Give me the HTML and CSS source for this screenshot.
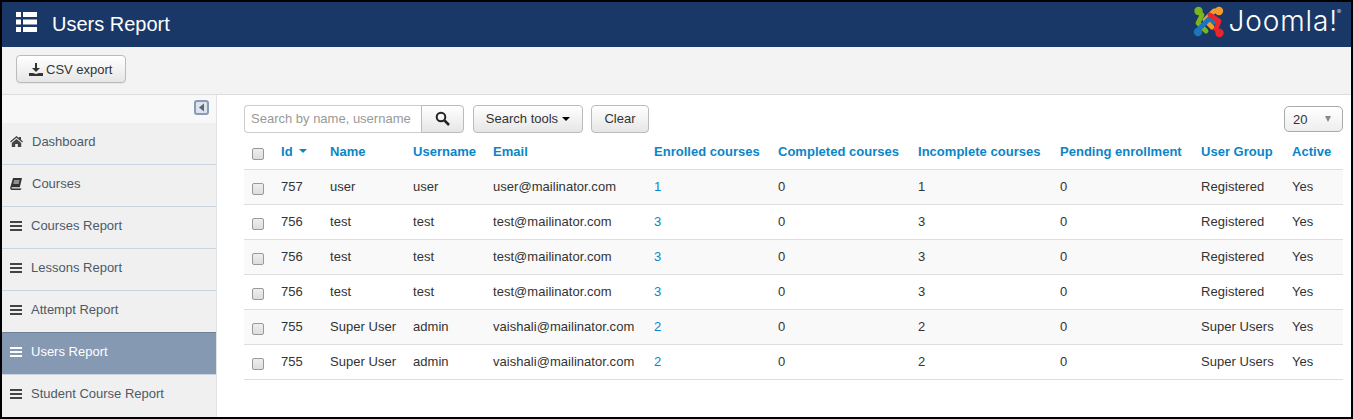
FILE: index.html
```html
<!DOCTYPE html>
<html lang="en">
<head>
<meta charset="utf-8">
<title>Users Report</title>
<link rel="stylesheet" href="styles.css">
</head>
<body>
<div class="frame">
  <header class="topbar">
    <div class="title-wrap">
      <svg class="grid-icon" width="21" height="20" viewBox="0 0 21 20"><path fill="#fff" d="M0 0h5v5H0zM7 0h14v5H7zM0 7.500h5v5H0zM7 7.500h14v5H7zM0 15h5v5H0zM7 15h14v5H7z"/></svg>
      <h1 class="page-title">Users Report</h1>
    </div>
    <div class="brand">
      <svg class="joomla-mark" width="32" height="32" viewBox="0 0 32 32" fill="none" stroke-linecap="round" stroke-linejoin="round">
        <path d="M5 5 L9 9 L5 17 L13 25" stroke="#7ab51d" stroke-width="4.800"/>
        <circle cx="5.500" cy="5" r="4.200" fill="#7ab51d"/>
        <path d="M27 5 L21 5 L12 14 L19 21" stroke="#f59b2b" stroke-width="4.800"/>
        <circle cx="26" cy="5" r="4.200" fill="#f59b2b"/>
        <path d="M5 27 L5 24 L17 12 L21 16" stroke="#1c75bc" stroke-width="4.800"/>
        <circle cx="5" cy="26" r="4.200" fill="#1c75bc"/>
        <path d="M27 27 L23 23 L26 15 L17 9" stroke="#e8262b" stroke-width="4.800"/>
        <circle cx="26.500" cy="27" r="4.200" fill="#e8262b"/>
      </svg>
      <span class="joomla-word">Joomla!<sup class="reg">®</sup></span>
    </div>
  </header>
  <div class="toolbar">
    <button class="btn btn-export" type="button">
      <svg width="14" height="13" viewBox="0 0 14 13"><path fill="#333" d="M6 0h2v5h3L7 9 3 5h3zM0 10h4l3 1 3-1h4v3H0z"/></svg>
      CSV export
    </button>
  </div>
  <div class="main">
    <aside class="sidebar">
      <div class="collapse-row">
        <svg width="15" height="15" viewBox="0 0 15 15"><rect x="1" y="1" width="13" height="13" rx="2" fill="#dde3ea" stroke="#859db6" stroke-width="2"/><path d="M10 3.500v8L5 7.500z" fill="#56677a"/></svg>
      </div>
      <nav class="menu">
        <a class="menu-item"><svg class="mi" width="13" height="11" viewBox="0 0 13 11"><path fill="#444" d="M6.500 0 9 2.100V1h2v2.800l2 1.700-.8 1-5.700-4.800L.8 6.500 0 5.500zM6.500 3 11.200 7v4H7.800V8H5.200v3H1.800V7z"/></svg><span>Dashboard</span></a>
        <a class="menu-item"><svg class="mi" width="12" height="12" viewBox="0 0 12 12"><path fill="#333" d="M3 0h9l-2.200 9.300H2.300c-.6 0-.8.500-.7.800.100.300.4.500.8.500H10.600l1-.5L11 11.300c-.1.400-.4.700-.9.700H2c-1.200 0-2-1-1.800-2.200zM4 2.500l-.2 1h5.500l.2-1zM3.500 4.500l-.2 1h5.500l.2-1z"/></svg><span class="menu-book">Courses</span></a>
        <a class="menu-item"><span class="bars"></span><span>Courses Report</span></a>
        <a class="menu-item"><span class="bars"></span><span>Lessons Report</span></a>
        <a class="menu-item"><span class="bars"></span><span>Attempt Report</span></a>
        <a class="menu-item is-active"><span class="bars"></span><span>Users Report</span></a>
        <a class="menu-item"><span class="bars"></span><span>Student Course Report</span></a>
      </nav>
    </aside>
    <section class="content">
      <div class="filters">
        <div class="search">
          <input class="search-input" type="text" placeholder="Search by name, username">
          <button class="btn search-btn" type="button" aria-label="Search"><svg width="15" height="15" viewBox="0 0 15 15" fill="none" stroke="#222"><circle cx="6" cy="6" r="4.300" stroke-width="2"/><path d="M9.500 9.500 14 14" stroke-width="2.500"/></svg></button>
        </div>
        <button class="btn tools" type="button">Search tools <span class="caret"></span></button>
        <button class="btn clear" type="button">Clear</button>
        <div class="limit"><span>20</span><span class="limit-arrow"></span></div>
      </div>
      <table class="report">
        <thead>
          <tr>
            <th class="c-check"><span class="check"></span></th>
            <th class="c-id"><a>Id</a><span class="sort"></span></th>
            <th class="c-name"><a>Name</a></th>
            <th class="c-user"><a>Username</a></th>
            <th class="c-email"><a>Email</a></th>
            <th class="c-enr"><a>Enrolled courses</a></th>
            <th class="c-comp"><a>Completed courses</a></th>
            <th class="c-inc"><a>Incomplete courses</a></th>
            <th class="c-pend"><a>Pending enrollment</a></th>
            <th class="c-group"><a>User Group</a></th>
            <th class="c-active"><a>Active</a></th>
          </tr>
        </thead>
        <tbody>
          <tr><td><span class="check"></span></td><td>757</td><td>user</td><td>user</td><td>user@mailinator.com</td><td><a>1</a></td><td>0</td><td>1</td><td>0</td><td>Registered</td><td>Yes</td></tr>
          <tr><td><span class="check"></span></td><td>756</td><td>test</td><td>test</td><td>test@mailinator.com</td><td><a>3</a></td><td>0</td><td>3</td><td>0</td><td>Registered</td><td>Yes</td></tr>
          <tr><td><span class="check"></span></td><td>756</td><td>test</td><td>test</td><td>test@mailinator.com</td><td><a>3</a></td><td>0</td><td>3</td><td>0</td><td>Registered</td><td>Yes</td></tr>
          <tr><td><span class="check"></span></td><td>756</td><td>test</td><td>test</td><td>test@mailinator.com</td><td><a>3</a></td><td>0</td><td>3</td><td>0</td><td>Registered</td><td>Yes</td></tr>
          <tr><td><span class="check"></span></td><td>755</td><td>Super User</td><td>admin</td><td>vaishali@mailinator.com</td><td><a>2</a></td><td>0</td><td>2</td><td>0</td><td>Super Users</td><td>Yes</td></tr>
          <tr><td><span class="check"></span></td><td>755</td><td>Super User</td><td>admin</td><td>vaishali@mailinator.com</td><td><a>2</a></td><td>0</td><td>2</td><td>0</td><td>Super Users</td><td>Yes</td></tr>
        </tbody>
      </table>
    </section>
  </div>
</div>
</body>
</html>
```
FILE: styles.css
```css
* { box-sizing: border-box; }
html, body { margin: 0; padding: 0; height: 100%; }
body { font-family: "Liberation Sans", Arial, sans-serif; font-size: 13px; color: #333; background: #000; overflow: hidden; }
.frame { height: 419px; width: 1353px; border: 2px solid #000; background: #fff; display: flex; flex-direction: column; overflow: hidden; }
.topbar { height: 45px; flex: none; background: #1a3867; display: flex; justify-content: space-between; padding: 0 13px 0 14px; }
.title-wrap { display: flex; align-items: center; gap: 15px; }
.grid-icon { margin-top: -6px; }
.page-title { margin: 0; font-size: 20px; font-weight: 400; color: #fff; line-height: 45px; }
.brand { display: flex; align-items: flex-start; padding-top: 4px; gap: 3px; }
.joomla-word { color: #fff; font-family: "Inter", "Liberation Sans", sans-serif; font-size: 28px; font-weight: 300; line-height: 30px; letter-spacing: .9px; position: relative; }
.reg { font-size: 6px; position: absolute; top: -9px; right: -3px; line-height: 30px; letter-spacing: 0; }
.toolbar { height: 48px; flex: none; background: #f3f3f3; border-bottom: 1px solid #ddd; padding: 8px 14px; }
.btn { font-family: inherit; font-size: 13px; color: #333; height: 28px; border: 1px solid #bbb; border-radius: 4px; background: linear-gradient(#fff, #e6e6e6); padding: 0 12px; display: inline-flex; align-items: center; gap: 3px; }
.btn-export { width: 110px; padding: 0 12px; box-shadow: 0 1px 1px rgba(0,0,0,.05); }
.main { flex: 1; display: flex; min-height: 0; }
.sidebar { width: 215px; flex: none; background: #f0f0f0; border-right: 1px solid #e3e3e3; }
.collapse-row { height: 28px; background: #f8f8f8; display: flex; justify-content: flex-end; align-items: center; padding-right: 7px; padding-bottom: 4px; }
.menu { display: flex; flex-direction: column; }
.menu-item { height: 42px; display: flex; align-items: center; padding-left: 8px; gap: 9px; color: #4d5a66; border-bottom: 1px solid #c9d5e0; padding-bottom: 4px; }
.menu-item:last-child { border-bottom-color: transparent; }
.mi { flex: none; }
.menu-book { margin-left: 1px; }
.bars { display: block; flex: none; width: 12px; height: 10px; border-top: 2px solid #444; border-bottom: 2px solid #444; position: relative; }
.bars::after { content: ""; position: absolute; left: 0; right: 0; top: 2px; height: 2px; background: #444; }
.is-active { background: #8599b3; color: #fff; border-top: 1px solid #6f7f94; margin-top: -1px; height: 43px; }
.is-active .bars { border-color: #fff; }
.is-active .bars::after { background: #fff; }
.content { flex: 1; min-width: 0; padding: 10px 8px 0 27px; }
.filters { display: flex; align-items: center; height: 28px; }
.search { display: flex; width: 220px; }
.search-input { width: 177px; height: 28px; border: 1px solid #ccc; border-right: 0; border-radius: 4px 0 0 4px; padding: 0 6px 2px; font: 13px "Liberation Sans", Arial, sans-serif; color: #333; background: #fff; }
.search-input::placeholder { color: #999; opacity: 1; }
.search-btn { width: 43px; border-radius: 0 4px 4px 0; justify-content: center; padding: 0 0 2px; }
.tools { margin-left: 9px; width: 110px; justify-content: center; padding: 0 0 2px; gap: 4px; }
.caret { display: inline-block; width: 0; height: 0; border-left: 4px solid transparent; border-right: 4px solid transparent; border-top: 4px solid #000; margin-top: 2px; }
.clear { margin-left: 8px; width: 58px; justify-content: center; padding: 0 0 2px; }
.limit { margin-left: auto; width: 59px; height: 26px; border: 1px solid #aaa; border-radius: 5px; background: linear-gradient(#fff, #eee); display: flex; justify-content: space-between; align-items: center; padding: 0 11px 0 8px; }
.limit-arrow { width: 0; height: 0; border-left: 3.500px solid transparent; border-right: 3.500px solid transparent; border-top: 6px solid #888; }
.report { border-collapse: collapse; width: 1099px; table-layout: fixed; margin-top: 0; }
.report th { height: 36px; text-align: left; font-weight: 700; padding: 0 0 0 9px; border-bottom: 1px solid #ddd; padding-top: 2px; letter-spacing: .02px; }
.report th a { color: #0a85c8; }
.report td { height: 35px; padding: 0 0 0 9px; border-bottom: 1px solid #ddd; letter-spacing: .04px; }
.report td a { color: #0a85c8; }
.report tbody tr:nth-child(odd) td { background: #f9f9f9; }
.report th:first-child, .report td:first-child { padding-left: 8px; }
.c-check { width: 28px; } .c-id { width: 49px; } .c-name { width: 83px; } .c-user { width: 80px; }
.c-email { width: 161px; } .c-enr { width: 124px; } .c-comp { width: 140px; } .c-inc { width: 142px; }
.c-pend { width: 141px; } .c-group { width: 91px; } .c-active { width: 60px; }
.check { display: block; width: 12px; height: 12px; border: 1px solid #999; border-radius: 2px; background: linear-gradient(#eee, #ddd); margin-top: 4px; }
.sort { display: inline-block; margin-left: 6px; vertical-align: 3px; width: 0; height: 0; border-left: 4px solid transparent; border-right: 4px solid transparent; border-top: 4px solid #0a85c8; }
```
